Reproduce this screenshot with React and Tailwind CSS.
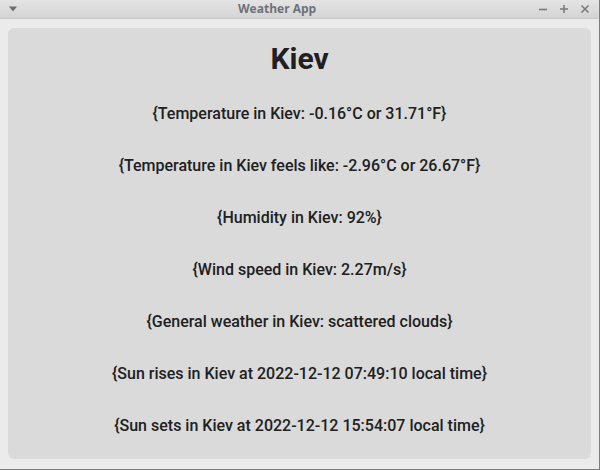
import React from "react";

const lines = [
  "{Temperature in Kiev: -0.16°C or 31.71°F}",
  "{Temperature in Kiev feels like: -2.96°C or 26.67°F}",
  "{Humidity in Kiev: 92%}",
  "{Wind speed in Kiev: 2.27m/s}",
  "{General weather in Kiev: scattered clouds}",
  "{Sun rises in Kiev at 2022-12-12 07:49:10 local time}",
  "{Sun sets in Kiev at 2022-12-12 15:54:07 local time}",
];

const TitleBar = () => (
  <div className="h-[19px] flex items-center px-[7px] bg-gradient-to-b from-[#e4e4e4] to-[#d4d4d4] border-b border-[#c8c8c8]">
    <svg width="10" height="6" viewBox="0 0 10 6" className="ml-[1px]">
      <path d="M1 0.5 L9 0.5 L5 5.5 Z" fill="#6e6e6e" />
    </svg>
    <span className="font-['Open_Sans',sans-serif] font-bold text-[12px] text-[#6d7279] ml-[220px]">
      Weather App
    </span>
    <div className="flex items-center gap-[11px] ml-auto mr-[2px]">
      <svg width="10" height="10" viewBox="0 0 10 10">
        <path d="M1 5.5 H9" stroke="#7a7a7a" strokeWidth="1.6" />
      </svg>
      <svg width="10" height="10" viewBox="0 0 10 10">
        <path d="M1 5 H9 M5 1 V9" stroke="#7a7a7a" strokeWidth="1.6" />
      </svg>
      <svg width="10" height="10" viewBox="0 0 10 10">
        <path d="M1.5 1.5 L8.5 8.5 M8.5 1.5 L1.5 8.5" stroke="#7a7a7a" strokeWidth="1.6" />
      </svg>
    </div>
  </div>
);

export default function App() {
  return (
    <div className="w-[600px] h-[470px] flex flex-col bg-[#ebebeb] border-r border-b border-[#7c7c7c] overflow-hidden">
      <TitleBar />
      <div className="flex-1 px-[8px] pt-[9px] pb-[10px]">
        <div className="h-full bg-[#dadada] rounded-[6px] flex flex-col items-center text-[#202020] font-['Roboto',sans-serif] pt-[9px]">
          <h1 className="text-[30px] font-bold leading-[44px]">Kiev</h1>
          <div className="flex flex-col items-center gap-[30px] mt-[22px]">
            {lines.map((l) => (
              <p key={l} className="text-[16px] font-medium leading-[22px]">
                {l}
              </p>
            ))}
          </div>
        </div>
      </div>
    </div>
  );
}
